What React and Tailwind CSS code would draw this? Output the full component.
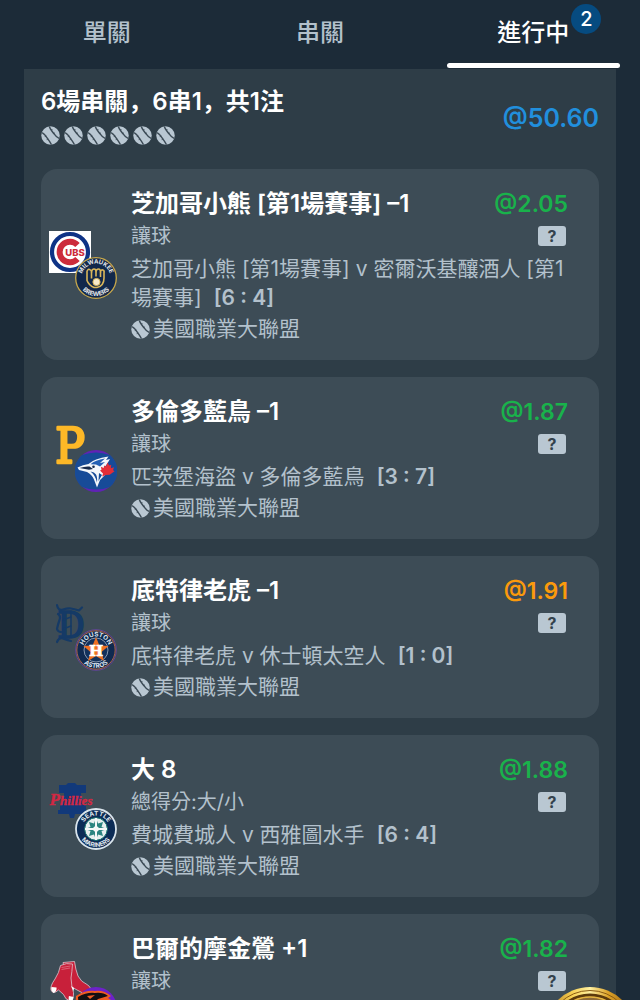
import React from "react";

const SANS = "Inter, sans-serif";
const CONDENSED = "'DejaVu Serif Condensed', 'DejaVu Serif', serif";

function Baseball() {
  return (
    <svg viewBox="0 0 20 20" className="size-[19px] shrink-0" aria-hidden="true">
      <circle cx="10" cy="10" r="9.7" fill="#b9c7d2" />
      <g fill="none" stroke="#3b4a55" strokeWidth="1.500">
        <path d="M1.200 7C4 8.500 5.200 10.500 6.800 13S9.500 17 11 19.600" />
        <path d="M8.800 .5C9.500 3.500 11.500 5.200 13.200 7.600S16 11.800 19 13" />
        <path d="M4 11l1.500-.8M6 14.300l1.500-.9M12 3.800l-1.500.8M14.600 7.300l-1.500.8" strokeWidth="1" />
      </g>
    </svg>
  );
}

function RingText({ id, top, bottom, topSize, bottomSize, color, rt = 14, rb = 18 }) {
  return (
    <g fill={color} fontFamily={SANS} fontWeight="700" textAnchor="middle">
      <path id={id + "-t"} d={`M${21 - rt} 21a${rt} ${rt} 0 0 1 ${rt * 2} 0`} fill="none" />
      <path id={id + "-b"} d={`M${21 - rb} 21a${rb} ${rb} 0 0 0 ${rb * 2} 0`} fill="none" />
      <text fontSize={topSize}><textPath href={`#${id}-t`} startOffset="50%">{top}</textPath></text>
      <text fontSize={bottomSize}><textPath href={`#${id}-b`} startOffset="50%">{bottom}</textPath></text>
    </g>
  );
}

function Cubs() {
  return (
    <svg viewBox="0 0 42 42" className="size-[42px]" role="img" aria-label="Cubs">
      <rect width="42" height="42" fill="#fff" />
      <circle cx="21" cy="21" r="18" fill="#fff" stroke="#0e3386" strokeWidth="4.2" />
      <path d="M28.500 14A10.300 10.300 0 1 0 28.500 28" fill="none" stroke="#cc2b3b" strokeWidth="6" />
      <text x="26" y="24.600" textAnchor="middle" fontFamily={SANS} fontWeight="800" fontSize="9.500" fill="#cc2b3b">UBS</text>
    </svg>
  );
}

function Brewers() {
  return (
    <svg viewBox="0 0 42 42" className="size-[42px]" role="img" aria-label="Milwaukee Brewers">
      <circle cx="21" cy="21" r="20.3" fill="#12284b" stroke="#c9a94b" strokeWidth="1.3" />
      <RingText id="brewers" top="MILWAUKEE" bottom="BREWERS" topSize="6" bottomSize="6.200" color="#e6e8ea" rt={14.5} />
      <g fill="#12284b" stroke="#d9b65a" strokeWidth="1.600" strokeLinejoin="round">
        <path d="M12 14.500q.500-2.500 2.500-2t2 2.500q.500-3 2.500-3t2 2.500q.500-2.500 2.500-2.500t2 3q.500-2.500 2.300-2t1.200 3v5q0 8-7 9.500h-3q-5-2-7-7z" />
        <path d="M16.500 15v6.500M21 14.500v5M25.500 15v5" fill="none" />
      </g>
      <circle cx="21.500" cy="25" r="3.600" fill="#f7eacb" stroke="#d9b65a" />
    </svg>
  );
}

function Pirates() {
  return (
    <svg viewBox="0 0 42 42" className="size-[42px] overflow-visible" role="img" aria-label="Pirates">
      <text x="21" y="39" textAnchor="middle" fontFamily={CONDENSED} fontSize="49" fill="#fdb827" stroke="#fdb827" strokeWidth="2.600" strokeLinejoin="round">P</text>
    </svg>
  );
}

function BlueJays() {
  return (
    <svg viewBox="0 0 42 42" className="size-[42px]" role="img" aria-label="Blue Jays">
      <circle cx="21" cy="21" r="21" fill="#6023b5" />
      <path d="M7 5q14-5 28 0a21 21 0 0 1 0 32q-14 5-28 0a21 21 0 0 1 0-32z" fill="#174b98" />
      <path d="M2.500 17.500Q8 14.500 13.500 14 19 8.500 33.500 6.500L31 10l4-1-3 5-3 4 1 7-5 5-3 7.500-3-8q-2-5-7-7.500L4 20z" fill="#f4f7fb" />
      <path d="M15.500 14.300Q20 10 30 8.500l-5 4.500 5-1-5 4.500-4-2z" fill="#2460b4" />
      <path d="M4.500 18Q10 16 14.500 16.500l3.500 2.500-4 .8z" fill="#15284a" />
      <path d="M15.500 21.500q4 .5 5.500 3t1 8q-1.500-7-6.500-11zM24 23l3 2-3.500 6z" fill="#174b98" />
      <circle cx="18.500" cy="16.800" r="1.300" fill="#15284a" />
      <path d="M32.500 12.500l1.700 3 2-.8-.3 3.600 3-1-.8 3 1.400.9-4.800 3.600-4 .2-3.500 1.500.8-3-3-3 1.500-.8-.6-3 2.800 1.200.4-2.500 1.800 1z" fill="#e22d38" />
    </svg>
  );
}

function Tigers() {
  return (
    <svg viewBox="0 0 42 42" className="size-[42px] overflow-visible" role="img" aria-label="Tigers">
      <text x="22" y="35" textAnchor="middle" fontFamily={CONDENSED} fontSize="38" fill="#153a66" stroke="#153a66" strokeWidth="1.600">D</text>
      <g fill="none" stroke="#153a66" strokeLinecap="round" strokeLinejoin="round">
        <path d="M8 2q1 6 6 4.500t8-1 8 2l3-3M9 11q3 2 1.500 6T8 26q1 3 4 3M8 39q2-5 6-3.500t8 2.500" strokeWidth="2.200" />
        <path d="M22 8v26" strokeWidth="1.600" />
        <path d="M14 17l8-3M14 26l8-3" strokeWidth="1.400" />
      </g>
    </svg>
  );
}

function Astros() {
  return (
    <svg viewBox="0 0 42 42" className="size-[42px]" role="img" aria-label="Houston Astros">
      <circle cx="21" cy="21" r="20.300" fill="#102a50" stroke="#65479a" strokeWidth="1" />
      <circle cx="21" cy="21" r="19.200" fill="none" stroke="#d77943" strokeWidth=".8" />
      <circle cx="21" cy="21" r="12" fill="#12315c" stroke="#d6dce6" strokeWidth=".6" />
      <RingText id="astros" top="HOUSTON" bottom="ASTROS" topSize="6.400" bottomSize="6.400" color="#d9e1ec" rt={13.5} rb={18} />
      <path d="M21 8l3.400 8.500 9.200.6-7.100 5.800 2.400 9L21 27l-7.900 4.900 2.400-9-7.100-5.800 9.200-.6z" fill="#ee7023" />
      <text x="21" y="26.500" textAnchor="middle" fontFamily="'DejaVu Serif', serif" fontWeight="700" fontSize="15" fill="#fff" stroke="#fff" strokeWidth=".6">H</text>
    </svg>
  );
}

function Phillies() {
  return (
    <svg viewBox="0 0 42 42" className="size-[42px] overflow-visible" role="img" aria-label="Phillies">
      <path d="M10 3h7l2-2h7l2 2h9v8h-5q0 10 5 13v4h2v4H26l-1 4h-4l-1-4H9v-4h2v-4q5-4 4-13h-5z" fill="#12397a" />
      <text x="22" y="23" textAnchor="middle" fontFamily="'Liberation Serif', serif" fontWeight="700" fontStyle="italic" fontSize="13" fill="#d22843" stroke="#d22843" strokeWidth=".4">
        <tspan fontSize="17">P</tspan>hillies
      </text>
    </svg>
  );
}

function Mariners() {
  return (
    <svg viewBox="0 0 42 42" className="size-[42px]" role="img" aria-label="Seattle Mariners">
      <circle cx="21" cy="21" r="20" fill="#0c2c56" stroke="#d9e4ec" strokeWidth="1.800" />
      <RingText id="mariners" top="SEATTLE" bottom="MARINERS" topSize="6.400" bottomSize="6.200" color="#e1e9ef" rt={13.5} />
      <circle cx="21" cy="21" r="11.300" fill="#e8efef" stroke="#10706a" />
      <path d="M14 14l5 1.500L21 10l2 5.500 5-1.500-1.500 5L32 21l-5.500 2 1.500 5-5-1.500L21 32l-2-5.500-5 1.500 1.500-5L10 21l5.500-2z" fill="#2b8480" />
      <path d="M21 10v22M10 21h22" stroke="#f5f8f8" strokeWidth="2" />
      <circle cx="21" cy="21" r="2.800" fill="#f5f8f8" />
    </svg>
  );
}

function RedSox() {
  return (
    <svg viewBox="0 0 42 42" className="size-[42px]" role="img" aria-label="Red Sox">
      <g fill="#c8203a" stroke="#dcc7cf" strokeWidth=".8" strokeLinejoin="round">
        <path d="M14 1.500L25.500.5q1 8 3.500 14.500 3 6 9 8.500 5 3 3.500 8-2 3-7 1L19 24z" />
        <path d="M11.500 4.500q6-3 12-1.500-.5 8-1.500 14 .500 9 2.500 14.500.5 7-4 8-4-.5-6-6l-5-4.500Q4 34 2 29q-1-4 4-11 4-6 5.500-13.500z" />
      </g>
      <path d="M2.500 26l5 .5q.500 4-3 5.500-3-1.500-2-6zM20 35l4.500 1q0 4-3.500 4.500-2-2-1-5.500zM22 25l3 2-.5 3z" fill="#fff" />
      <path d="M12.500 6.500l9-1.500M12.500 8.500l8.500-1.500" stroke="#e77b8b" strokeWidth=".7" />
    </svg>
  );
}

function Orioles() {
  return (
    <svg viewBox="0 0 42 42" className="size-[42px]" role="img" aria-label="Orioles">
      <circle cx="21" cy="21" r="21" fill="#6d22c9" />
      <path d="M1 9q9-6 19-5 9-1 16 5l-3 2q7 4 9 11L30 38H8L0 26z" fill="#f05b22" />
      <path d="M3 10q9-5 17-4 8-1 13 3l-10 3-6 6-6-2-7 7zM20 17l10-4 7 6-13 1z" fill="#130f12" />
      <path d="M12 9l8-1-5 4z" fill="#f05b22" />
    </svg>
  );
}

function Coin() {
  return (
    <svg viewBox="0 0 92 92" className="size-[92px]" aria-hidden="true">
      <defs>
        <linearGradient id="gold" x1="0" x2="1">
          <stop offset="0" stopColor="#a96c12" />
          <stop offset=".3" stopColor="#f6cf51" />
          <stop offset=".5" stopColor="#fff0a0" />
          <stop offset=".7" stopColor="#dca127" />
          <stop offset="1" stopColor="#8d560c" />
        </linearGradient>
      </defs>
      <circle cx="46" cy="46" r="46" fill="url(#gold)" />
      <circle cx="46" cy="46" r="42.500" fill="none" stroke="#8a5a12" strokeWidth="1" />
      <circle cx="46" cy="46" r="38" fill="#8d6a38" stroke="#5c3a0c" strokeWidth="3" />
      <circle cx="46" cy="46" r="36" fill="none" stroke="#e4b441" strokeWidth="1.500" />
      <circle cx="46" cy="46" r="32" fill="url(#gold)" />
    </svg>
  );
}

const bets = [
  { title: "芝加哥小熊 [第1場賽事] –1", type: "讓球", odds: "@2.05", tone: "text-[#19b24b]", match: "芝加哥小熊 [第1場賽事] v 密爾沃基釀酒人 [第1場賽事]", score: "[6 : 4]", home: Cubs, away: Brewers },
  { title: "多倫多藍鳥 –1", type: "讓球", odds: "@1.87", tone: "text-[#19b24b]", match: "匹茨堡海盜 v 多倫多藍鳥", score: "[3 : 7]", home: Pirates, away: BlueJays },
  { title: "底特律老虎 –1", type: "讓球", odds: "@1.91", tone: "text-[#fb9a0c]", match: "底特律老虎 v 休士頓太空人", score: "[1 : 0]", home: Tigers, away: Astros },
  { title: "大 8", type: "總得分:大/小", odds: "@1.88", tone: "text-[#19b24b]", match: "費城費城人 v 西雅圖水手", score: "[6 : 4]", home: Phillies, away: Mariners },
  { title: "巴爾的摩金鶯 +1", type: "讓球", odds: "@1.82", tone: "text-[#19b24b]", home: RedSox, away: Orioles },
];

function BetCard({ bet }) {
  const Home = bet.home;
  const Away = bet.away;
  return (
    <li className="flex min-h-[162px] items-center rounded-2xl bg-[#3d4c56] pl-2 pr-[31px]">
      <div className="grid size-[68px] shrink-0 grid-cols-[26px_42px] grid-rows-[26px_42px]">
        <div className="col-start-1 row-start-1"><Home /></div>
        <div className="relative col-start-2 row-start-2"><Away /></div>
      </div>
      <div className="ml-[14px] min-w-0 flex-1 self-stretch pb-[15px] pt-[19px]">
        <div className="flex justify-between text-2xl leading-8">
          <h2 className="font-semibold text-white">{bet.title}</h2>
          <span className={"text-[23px] font-semibold " + bet.tone}>{bet.odds}</span>
        </div>
        <div className="flex h-8 items-center justify-between pr-0.5">
          <span className="text-xl">{bet.type}</span>
          <button aria-label="說明 ?" className="h-5 w-7 rounded-[3px] bg-[#b9c7d2] text-base font-bold leading-5 text-[#34424d]">?</button>
        </div>
        {bet.match && (
          <>
            <p className="pb-px pt-0.5 text-[21px] leading-[29px]">
              {bet.match}
              <span className="ml-3 whitespace-nowrap font-semibold">{bet.score}</span>
            </p>
            <p className="flex items-center gap-[3px] text-[21px] leading-8">
              <Baseball />
              美國職業大聯盟
            </p>
          </>
        )}
      </div>
    </li>
  );
}

export default function App() {
  return (
    <div className="relative h-screen overflow-hidden bg-[#1c2b38] font-['Inter','Noto_Sans_CJK_TC',sans-serif] text-[#b3c1cc]">
      <nav className="grid h-[69px] grid-cols-3 text-2xl">
        <button className="pb-1 font-medium">單關</button>
        <button className="pb-1 font-medium">串關</button>
        <button className="relative pb-1 font-medium text-white">
          進行中
          <span className="absolute left-1/2 top-1 ml-[38px] flex size-[30px] items-center justify-center rounded-full bg-[#064b80] text-xl">2</span>
          <span className="absolute inset-x-5 bottom-px h-[5px] rounded-full bg-white" />
        </button>
      </nav>
      <main className="mx-6 bg-[#2e3d47] px-[17px] pb-5">
        <header className="flex h-[100px] items-center justify-between">
          <div className="pb-2">
            <h1 className="font-['Inter','Noto_Sans_CJK_SC',sans-serif] text-2xl font-semibold leading-8 text-white">6場串關，6串1，共1注</h1>
            <div className="mt-2 flex gap-1">
              {[0, 1, 2, 3, 4, 5].map((n) => <Baseball key={n} />)}
            </div>
          </div>
          <span className="text-[25px] font-semibold text-[#218fdd]">@50.60</span>
        </header>
        <ul className="flex flex-col gap-[17px]">
          {bets.map((bet) => <BetCard key={bet.title} bet={bet} />)}
        </ul>
      </main>
      <button aria-label="金幣" className="absolute -bottom-[79px] right-1"><Coin /></button>
    </div>
  );
}
